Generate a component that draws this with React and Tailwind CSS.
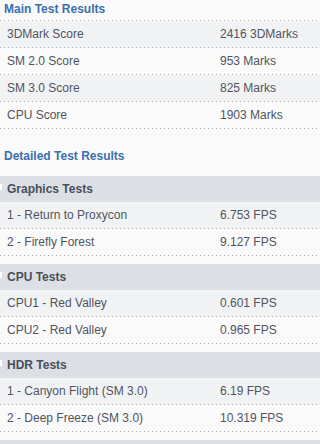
const mainResults = [
  { name: '3DMark Score', value: '2416 3DMarks' },
  { name: 'SM 2.0 Score', value: '953 Marks' },
  { name: 'SM 3.0 Score', value: '825 Marks' },
  { name: 'CPU Score', value: '1903 Marks' },
];

const detailedGroups = [
  {
    title: 'Graphics Tests',
    rows: [
      { name: '1 - Return to Proxycon', value: '6.753 FPS' },
      { name: '2 - Firefly Forest', value: '9.127 FPS' },
    ],
  },
  {
    title: 'CPU Tests',
    rows: [
      { name: 'CPU1 - Red Valley', value: '0.601 FPS' },
      { name: 'CPU2 - Red Valley', value: '0.965 FPS' },
    ],
  },
  {
    title: 'HDR Tests',
    rows: [
      { name: '1 - Canyon Flight (SM 3.0)', value: '6.19 FPS' },
      { name: '2 - Deep Freeze (SM 3.0)', value: '10.319 FPS' },
    ],
  },
  // next group only peeks in at the bottom edge
  { title: '', rows: [] },
];

const Dots = () => (
  <div className="h-px bg-[image:linear-gradient(to_right,#a9abb0_1px,transparent_1px)] bg-[length:4px_1px]" />
);

const Row = ({ name, value, odd }) => (
  <div className={odd ? 'bg-[#f1f2f4]' : ''}>
    <div className="flex h-[26px] items-center text-[12px] text-[#505560]">
      <span className="w-[220px] pl-[7px]">{name}</span>
      <span>{value}</span>
    </div>
    <Dots />
  </div>
);

const GroupHeader = ({ title }) => (
  <div className="relative flex h-[26px] items-center bg-[#dce0e5] pl-[7px] text-[12px] font-bold text-[#4a4f5a]">
    <span className="absolute left-0 top-[8px] h-[6px] w-[2px] bg-white" />
    {title}
  </div>
);

const App = () => {
  return (
    <div className="h-[444px] overflow-hidden bg-[#fafafa] font-['Liberation_Sans',Arial,sans-serif]">
      <h2 className="h-[20px] pl-[4px] pt-[1px] text-[12px] font-bold leading-[16px] text-[#3a6fb0]">
        Main Test Results
      </h2>
      <Dots />
      {mainResults.map((r, i) => (
        <Row key={r.name} name={r.name} value={r.value} odd={i % 2 === 0} />
      ))}

      <h2 className="mt-[19px] h-[28px] pl-[4px] text-[12px] font-bold leading-[16px] text-[#3a6fb0]">
        Detailed Test Results
      </h2>
      {detailedGroups.map((g, gi) => (
        <div key={gi} className="mb-[8px]">
          <GroupHeader title={g.title} />
          {g.rows.map((r, i) => (
            <Row key={r.name} name={r.name} value={r.value} odd={i % 2 === 0} />
          ))}
        </div>
      ))}
    </div>
  );
};

export default App;
